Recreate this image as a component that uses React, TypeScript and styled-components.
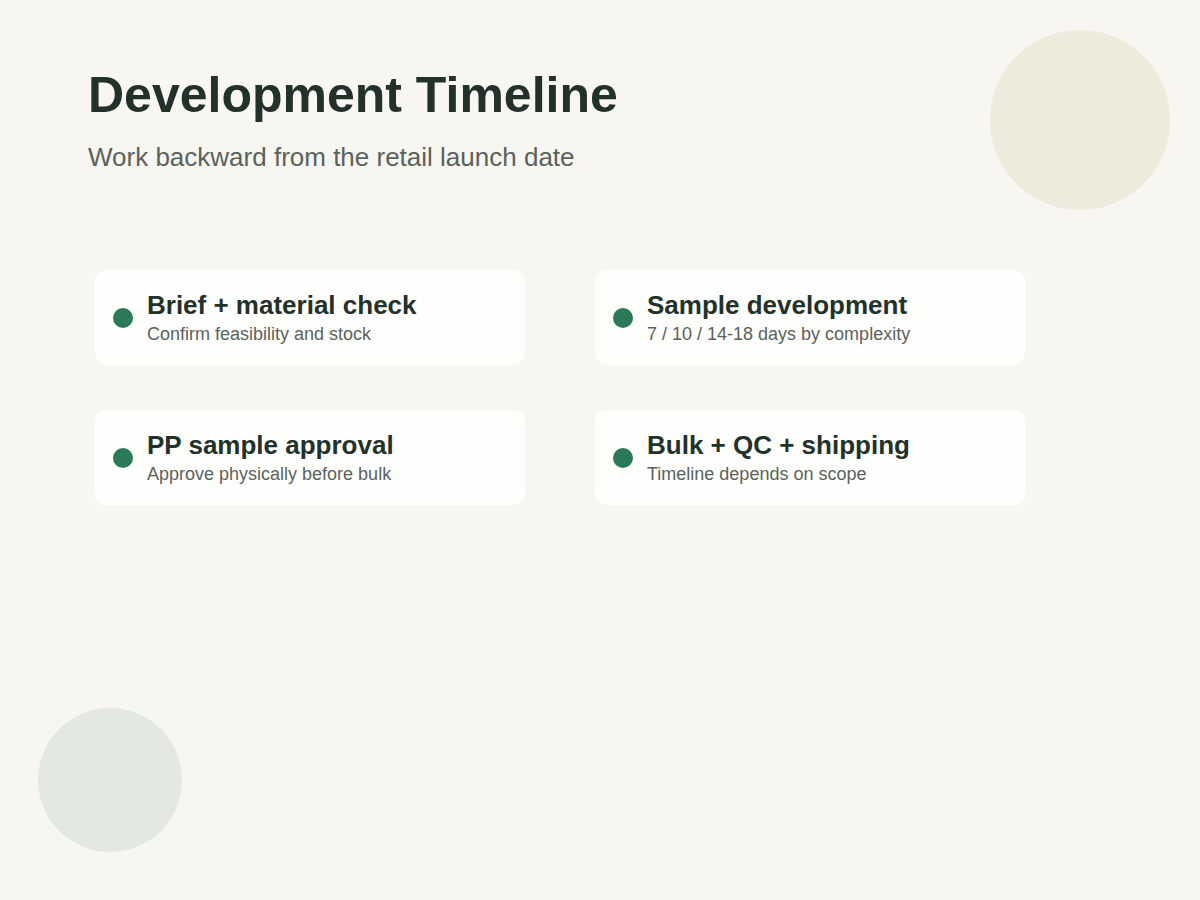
import React from 'react'
import styled, { createGlobalStyle } from 'styled-components'

const Global = createGlobalStyle`
  html, body { margin: 0; padding: 0; background: #f7f6f1; }
  body { font-family: "Liberation Sans", Arial, sans-serif; }
`

const Page = styled.div`
  position: relative;
  width: 1200px;
  height: 900px;
  overflow: hidden;
  background: #f7f6f1;
  padding: 66px 0 0 88px;
  box-sizing: border-box;
`

const Blob = styled.div<{ $size: number; $color: string; $top: number; $left: number }>`
  position: absolute;
  width: ${p => p.$size}px;
  height: ${p => p.$size}px;
  top: ${p => p.$top}px;
  left: ${p => p.$left}px;
  border-radius: 50%;
  background: ${p => p.$color};
`

const Title = styled.h1`
  margin: 0;
  font-size: 50px;
  line-height: 58px;
  font-weight: 700;
  color: #22322a;
`

const Subtitle = styled.p`
  margin: 18px 0 0;
  font-size: 26px;
  line-height: 30px;
  color: #5a625c;
`

const Grid = styled.div`
  display: grid;
  grid-template-columns: 430px 430px;
  column-gap: 70px;
  row-gap: 45px;
  margin: 98px 0 0 7px;
`

const Card = styled.div`
  display: flex;
  align-items: center;
  gap: 14px;
  height: 95px;
  box-sizing: border-box;
  padding: 0 18px;
  background: #fefefd;
  border-radius: 12px;
`

const Dot = styled.span`
  width: 20px;
  height: 20px;
  border-radius: 50%;
  background: #2b7a57;
  flex-shrink: 0;
`

const CardTitle = styled.div`
  font-size: 26px;
  line-height: 30px;
  font-weight: 700;
  color: #22322a;
`

const CardText = styled.div`
  margin-top: 3px;
  font-size: 18px;
  line-height: 22px;
  color: #5a625c;
`

const steps = [
  { title: 'Brief + material check', text: 'Confirm feasibility and stock' },
  { title: 'Sample development', text: '7 / 10 / 14-18 days by complexity' },
  { title: 'PP sample approval', text: 'Approve physically before bulk' },
  { title: 'Bulk + QC + shipping', text: 'Timeline depends on scope' },
]

export default function App() {
  return (
    <Page>
      <Global />
      <Blob $size={180} $color="#eeeadc" $top={30} $left={990} />
      <Blob $size={144} $color="#e3e8e1" $top={708} $left={38} />
      <Title>Development Timeline</Title>
      <Subtitle>Work backward from the retail launch date</Subtitle>
      <Grid>
        {steps.map(s => (
          <Card key={s.title}>
            <Dot />
            <div>
              <CardTitle>{s.title}</CardTitle>
              <CardText>{s.text}</CardText>
            </div>
          </Card>
        ))}
      </Grid>
    </Page>
  )
}
